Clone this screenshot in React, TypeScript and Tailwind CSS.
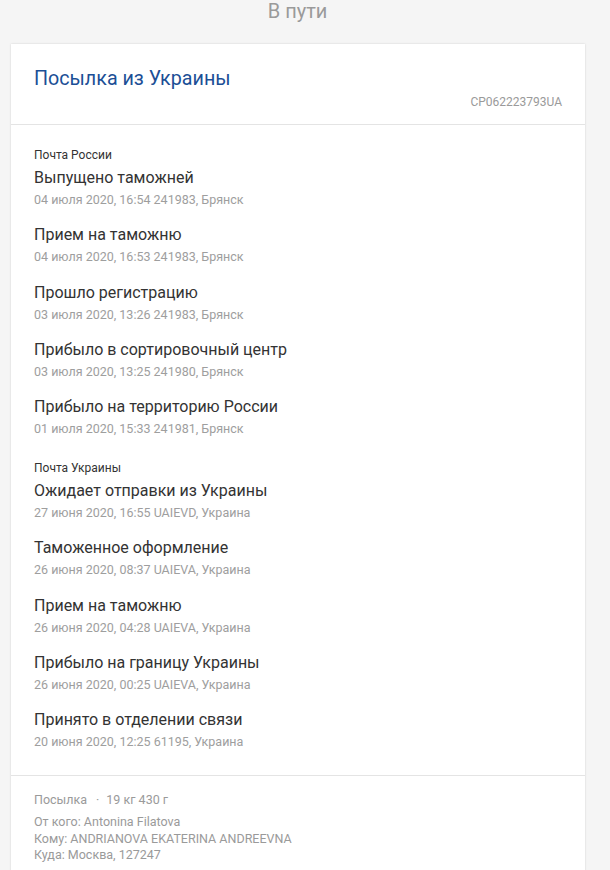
import React from 'react';

type TrackEvent = {
  title: string;
  date: string;
  place: string;
};

type Section = {
  operator: string;
  events: TrackEvent[];
};

const sections: Section[] = [
  {
    operator: 'Почта России',
    events: [
      { title: 'Выпущено таможней', date: '04 июля 2020, 16:54', place: '241983, Брянск' },
      { title: 'Прием на таможню', date: '04 июля 2020, 16:53', place: '241983, Брянск' },
      { title: 'Прошло регистрацию', date: '03 июля 2020, 13:26', place: '241983, Брянск' },
      { title: 'Прибыло в сортировочный центр', date: '03 июля 2020, 13:25', place: '241980, Брянск' },
      { title: 'Прибыло на территорию России', date: '01 июля 2020, 15:33', place: '241981, Брянск' },
    ],
  },
  {
    operator: 'Почта Украины',
    events: [
      { title: 'Ожидает отправки из Украины', date: '27 июня 2020, 16:55', place: 'UAIEVD, Украина' },
      { title: 'Таможенное оформление', date: '26 июня 2020, 08:37', place: 'UAIEVA, Украина' },
      { title: 'Прием на таможню', date: '26 июня 2020, 04:28', place: 'UAIEVA, Украина' },
      { title: 'Прибыло на границу Украины', date: '26 июня 2020, 00:25', place: 'UAIEVA, Украина' },
      { title: 'Принято в отделении связи', date: '20 июня 2020, 12:25', place: '61195, Украина' },
    ],
  },
];

const App: React.FC = () => {
  return (
    <div className="min-h-[870px] bg-[#f5f5f5] font-['Roboto',sans-serif]">
      <div className="w-[595px]">
        {/* Status */}
        <div className="text-center text-[20px] leading-[22px] text-[#9a9a9a]">В пути</div>

        <div className="ml-[11px] mt-[22px] w-[574px] bg-white shadow-[0_0_2px_rgba(0,0,0,0.15)]">
          {/* Header */}
          <div className="px-[23px] pt-[23px] pb-[14px] border-b border-[#e4e4e4]">
            <h1 className="text-[19.7px] leading-[24px] text-[#1c4f96]">Посылка из Украины</h1>
            <div className="mt-[3px] text-right text-[12px] leading-4 text-[#9a9a9a]">CP062223793UA</div>
          </div>

          {/* History */}
          <div className="px-[23px] pt-[22px] pb-[25px] border-b border-[#e4e4e4]">
            {sections.map((section, si) => (
              <div key={si} className={si > 0 ? 'mt-[23px]' : ''}>
                <div className="text-[12px] leading-4 text-[#333]">{section.operator}</div>
                <div className="mt-[5px] flex flex-col gap-[17.3px]">
                  {section.events.map((ev, i) => (
                    <div key={i}>
                      <div className="text-[16px] leading-5 text-[#333]">{ev.title}</div>
                      <div className="mt-1 text-[12.5px] leading-4 text-[#9e9e9e]">
                        {ev.date} {ev.place}
                      </div>
                    </div>
                  ))}
                </div>
              </div>
            ))}
          </div>

          {/* Details */}
          <div className="px-[23px] pt-4 pb-6 text-[12.5px] text-[#9a9a9a]">
            <div className="leading-4">
              Посылка<span className="ml-[9px] mr-[7px]">·</span>19 кг 430 г
            </div>
            <div className="mt-[6px] leading-[16.5px]">
              <div>От кого: Antonina Filatova</div>
              <div>Кому: ANDRIANOVA EKATERINA ANDREEVNA</div>
              <div>Куда: Москва, 127247</div>
            </div>
          </div>
        </div>
      </div>
    </div>
  );
};

export default App;
